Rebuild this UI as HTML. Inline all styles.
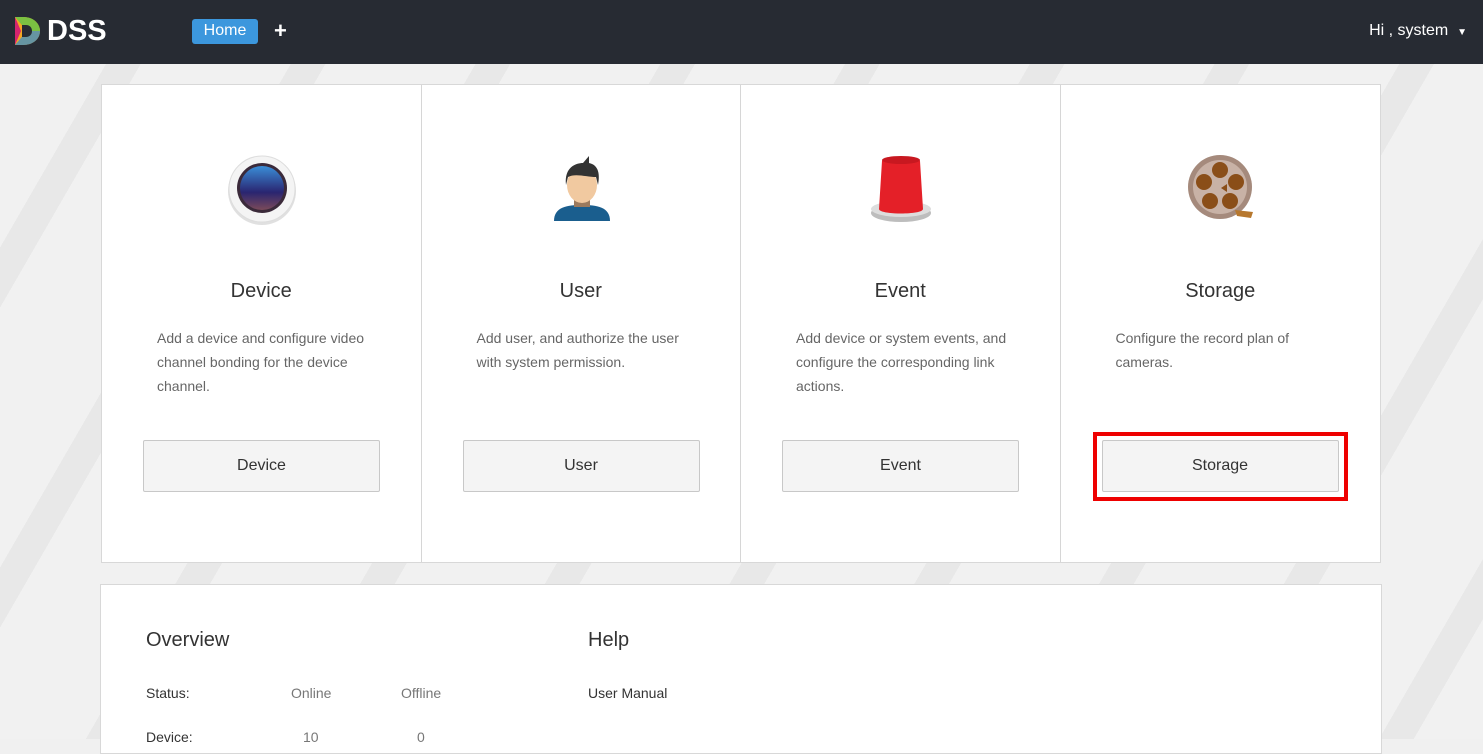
<!DOCTYPE html>
<html><head><meta charset="utf-8"><style>
*{margin:0;padding:0;box-sizing:border-box}
body{width:1483px;height:739px;overflow:hidden;font-family:"Liberation Sans",Arial,sans-serif;background:#f0f0f0;position:relative}
.bg{position:absolute;left:0;top:64px;width:1483px;height:675px;background:repeating-linear-gradient(-60deg,#f1f1f1 0 60px,#e8e8e8 60px 90px,#f1f1f1 90px 160px)}
.hdr{position:absolute;left:0;top:0;width:1483px;height:64px;background:#272b33}
.logo{position:absolute;left:47px;top:15px;color:#fff;font-weight:bold;font-size:29px}
.home{position:absolute;left:192px;top:19px;width:66px;height:25px;background:#3c97dd;border-radius:3px;color:#fff;font-size:16px;text-align:center;line-height:24px}
.plus{position:absolute;left:274px;top:18px;color:#fff;font-size:22px;font-weight:bold}
.hi{position:absolute;right:16px;top:22px;color:#fff;font-size:16px}
.card{position:absolute;left:101px;top:84px;width:1280px;height:479px;background:#fff;border:1px solid #d8d8d8;display:flex}
.col{width:320px;height:100%;border-right:1px solid #d6d6d6;position:relative}
.col:last-child{border-right:none}
.icon{position:absolute;left:124px;top:68px;width:72px;height:72px}
.t{position:absolute;top:195px;width:100%;text-align:center;font-size:20px;color:#333}
.d{position:absolute;left:55px;top:241px;width:220px;font-size:14px;line-height:24px;color:#666}
.b{position:absolute;left:41px;top:355px;width:237px;height:52px;background:#f4f4f4;border:1px solid #c8c8c8;border-radius:2px;text-align:center;line-height:50px;font-size:16px;color:#333}
.red{position:absolute;left:1093px;top:432px;width:255px;height:69px;border:4px solid #e00}
.card2{position:absolute;left:100px;top:584px;width:1282px;height:170px;background:#fff;border:1px solid #d8d8d8}
.card2 div{position:absolute;color:#333}
</style></head><body>
<div class="bg"></div>
<div class="hdr">
<svg style="position:absolute;left:13px;top:15px" width="28" height="32" viewBox="0 0 28 32"><path d="M2 2 L10 2 C22 2 27 10 27 16 C27 24 20 30 10 30 L2 30 Z" fill="#f5a623"/><path d="M2 2 L10 2 C22 2 27 10 27 16 L14 16 Z" fill="#7bc142"/><path d="M2 2 L8 16 L2 30 Z" fill="#d6246e"/><path d="M2 30 L14 16 L27 16 C27 24 20 30 10 30Z" fill="#2a8fd8" opacity=".7"/><path d="M9 10 L13 10 C17 10 19 13 19 16 C19 20 16 22 13 22 L9 22 Z" fill="#272b33"/></svg>
<div class="logo">DSS</div>
<div class="home">Home</div><div class="plus">+</div>
<div class="hi">Hi , system &nbsp;<span style="font-size:10px">▼</span></div>
</div>
<div class="card">
<div class="col">
<svg class="icon" viewBox="0 0 72 72"><circle cx="36" cy="38" r="34" fill="#e0e0e0"/><circle cx="36" cy="36" r="33" fill="#f4f4f4" stroke="#ddd"/><circle cx="36" cy="35" r="25" fill="#3b2a3a"/><defs><linearGradient id="g1" x1="0" y1="0" x2="0" y2="1"><stop offset="0" stop-color="#3a8ed8"/><stop offset=".6" stop-color="#2a2570"/><stop offset="1" stop-color="#7a4a5a"/></linearGradient></defs><circle cx="36" cy="35" r="22" fill="url(#g1)"/></svg>
<div class="t">Device</div>
<div class="d">Add a device and configure video channel bonding for the device channel.</div>
<div class="b">Device</div></div>
<div class="col">
<svg class="icon" viewBox="0 0 72 72"><path d="M8 68 C8 54 21 52 36 52 C51 52 64 54 64 68 Z" fill="#1a5e8e"/><rect x="28" y="44" width="16" height="10" fill="#9b7a5e"/><ellipse cx="36" cy="32" rx="15" ry="18" fill="#f1c9a0"/><path d="M20 32 C18 14 30 10 37 10 L43 3 L43 10 C53 12 54 22 52 32 L50 24 C41 24 29 20 22 24 Z" fill="#333"/></svg>
<div class="t">User</div>
<div class="d">Add user, and authorize the user with system permission.</div>
<div class="b">User</div></div>
<div class="col">
<svg class="icon" viewBox="0 0 72 72"><ellipse cx="36" cy="60" rx="30" ry="9" fill="#bdbdbd"/><ellipse cx="36" cy="56" rx="30" ry="8" fill="#ddd"/><path d="M14 56 L17 8 C17 4 55 4 55 8 L58 56 C58 62 14 62 14 56Z" fill="#e42028"/><ellipse cx="36" cy="7" rx="19" ry="4" fill="#c81820"/></svg>
<div class="t">Event</div>
<div class="d">Add device or system events, and configure the corresponding link actions.</div>
<div class="b">Event</div></div>
<div class="col">
<svg class="icon" viewBox="0 0 72 72"><circle cx="35" cy="34" r="32" fill="#a58a7c"/><circle cx="35" cy="34" r="27" fill="#c8b2a6"/><g fill="#8a4e18"><circle cx="35" cy="17" r="8"/><circle cx="51" cy="29" r="8"/><circle cx="45" cy="48" r="8"/><circle cx="25" cy="48" r="8"/><circle cx="19" cy="29" r="8"/></g><path d="M36 35 L42 31 L42 39Z" fill="#8a4e18"/><path d="M50 57 L68 59 L66 65 L52 63Z" fill="#b7782e"/></svg>
<div class="t">Storage</div>
<div class="d">Configure the record plan of cameras.</div>
<div class="b">Storage</div></div>
</div>
<div class="red"></div>
<div class="card2">
<div style="left:45px;top:44px;font-size:20px">Overview</div>
<div style="left:487px;top:44px;font-size:20px">Help</div>
<div style="left:45px;top:100px;font-size:14px">Status:</div>
<div style="left:190px;top:100px;font-size:14px;color:#777">Online</div>
<div style="left:300px;top:100px;font-size:14px;color:#777">Offline</div>
<div style="left:487px;top:100px;font-size:14px">User Manual</div>
<div style="left:45px;top:144px;font-size:14px">Device:</div>
<div style="left:202px;top:144px;font-size:14px;color:#777">10</div>
<div style="left:316px;top:144px;font-size:14px;color:#777">0</div>
</div>
</body></html>
